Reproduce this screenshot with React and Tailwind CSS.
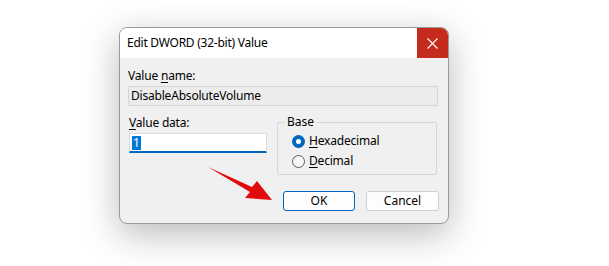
export default function App() {
  const font = { fontFamily: '"Segoe UI", "Noto Sans", "Open Sans", sans-serif' };
  return (
    <div className="relative w-[609px] h-[266px] bg-white overflow-hidden" style={font}>
      <div className="pt-[27px] pl-[119px]">
        <div className="w-[330px] h-[197px] rounded-[8px] border border-[#9a9a9a] bg-[#f0f0f0] overflow-hidden shadow-[0_10px_36px_rgba(0,0,0,0.28)] flex flex-col text-[12px] text-black leading-[16px]">
          <div className="h-[30px] bg-white flex items-center justify-between shrink-0">
            <span className="pl-[7px] text-[12px] tracking-[-0.25px]">Edit DWORD (32-bit) Value</span>
            <div className="w-[31px] h-[30px] bg-[#c42b1c] flex items-center justify-center">
              <svg width="11" height="11" viewBox="0 0 11 11">
                <path d="M0.5 0.5 L10.5 10.5 M10.5 0.5 L0.5 10.5" stroke="white" strokeWidth="1.1" />
              </svg>
            </div>
          </div>
          <div className="flex flex-col px-[8px] pt-[10px]">
            <div className="tracking-[-0.2px]">Value <u className="underline-offset-2">n</u>ame:</div>
            <div className="mt-[2px] h-[20px] w-[310px] bg-[#ececec] border border-[#d6d6d6] flex items-center pl-[2px] tracking-[-0.2px]">
              DisableAbsoluteVolume
            </div>
            <div className="flex mt-[9px]">
              <div className="flex flex-col w-[150px] pl-[1px]">
                <div className="tracking-[-0.2px]"><u className="underline-offset-2">V</u>alue data:</div>
                <div className="mt-[2px] h-[20px] w-[138px] bg-white border border-[#dcdcdc] border-b-2 border-b-[#0067c0] flex items-center pl-[2px]">
                  <span className="bg-[#0078d7] text-white px-[1px] leading-[14px]">1</span>
                </div>
              </div>
              <div className="relative ml-[-1px] mt-[7px] w-[160px] h-[53px] border border-[#d6d6d6] rounded-[2px] flex flex-col pl-[14px] pt-[10px] gap-[4px]">
                <span className="absolute top-[-9px] left-[7px] bg-[#f0f0f0] px-[2px]">Base</span>
                <div className="flex items-center gap-[4px]">
                  <span className="w-[13px] h-[13px] rounded-full bg-[#0067c0] flex items-center justify-center">
                    <span className="w-[5px] h-[5px] rounded-full bg-white"></span>
                  </span>
                  <span className="tracking-[-0.2px]"><u className="underline-offset-2">H</u>exadecimal</span>
                </div>
                <div className="flex items-center gap-[4px]">
                  <span className="w-[13px] h-[13px] rounded-full bg-[#f7f7f7] border border-[#5a5a5a]"></span>
                  <span className="tracking-[-0.2px]"><u className="underline-offset-2">D</u>ecimal</span>
                </div>
              </div>
            </div>
            <div className="flex justify-end gap-[11px] mt-[16px] pr-[1px]">
              <div className="w-[72px] h-[20px] rounded-[3px] border border-[#0067c0] bg-[#fdfdfd] flex items-center justify-center">OK</div>
              <div className="w-[73px] h-[20px] rounded-[3px] border border-[#cfcfcf] bg-[#fdfdfd] flex items-center justify-center">Cancel</div>
            </div>
          </div>
        </div>
      </div>
      <svg className="absolute left-0 top-0" width="609" height="266" viewBox="0 0 609 266">
        <polygon points="208,167 252,187 257,181 272,200 245,198 250,192" fill="#e00b0b" />
      </svg>
    </div>
  );
}
